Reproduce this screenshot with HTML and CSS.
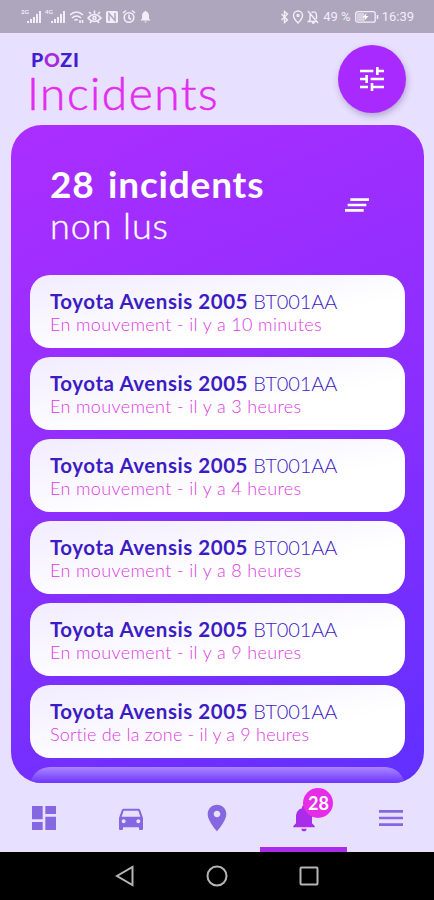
FILE: index.html
```html
<!DOCTYPE html>
<html lang="fr">
<head>
    <meta charset="UTF-8">
    <meta name="viewport" content="width=device-width, initial-scale=1.0">
    <title>POZI - Incidents</title>
    <link rel="stylesheet" href="styles.css">
</head>
<body>

    <!-- Status bar -->
    <div class="status-bar">
        <svg class="status-left" width="132" height="16" viewBox="0 0 132 16" fill="#f3edfa">
            <text class="net" x="0" y="5">2G</text>
            <path d="M6 12h2v2H6zM9 10h2v4H9zM12 8h2v6h-2zM15 5h2v9h-2zM18 2h2v12h-2z"/>
            <text class="net" x="24" y="5">4G</text>
            <path d="M30 12h2v2h-2zM33 10h2v4h-2zM36 8h2v6h-2zM39 5h2v9h-2zM42 2h2v12h-2z"/>
            <g fill="none" stroke="#f3edfa" stroke-width="1.6">
                <path d="M49 6q6.500-6 13 0M51 9q4.500-4 9 0M53.500 11.500q2-2 3 0M59 14v-3M61.500 14v-3"/>
                <path d="M67 9q6.500-7 13 0q-6.500 7-13 0zM68 3l2 2M73.500 1.500v3M79 3l-2 2M69 14l1.500-2M78 14l-1.500-2"/>
                <circle cx="73.500" cy="9" r="1.500"/>
                <circle cx="108" cy="8.500" r="4.800"/>
                <path d="M108 5.500v3.500l2 1.500M102 4l3-2.500M114 4l-3-2.500"/>
            </g>
            <rect x="85" y="2" width="12" height="12" rx="1.500"/>
            <path d="M88 12V4.500l6 7V4" fill="none" stroke="#aea6bc" stroke-width="1.500"/>
            <path d="M119.500 11.500l1.500-2V7q0-3.500 2.500-4.200a1 1 0 0 1 2 0Q128 3.500 128 7v2.500l1.500 2zM123 12.500h3q-1.500 2-3 0z"/>
        </svg>
        <div class="status-right">
            <svg width="40" height="14" viewBox="0 0 40 14" fill="none" stroke="#f3edfa" stroke-width="1.400">
                <path d="M1.500 4l6 6L4.500 12.500v-11L7.500 4l-6 6"/>
                <path d="M18 13q-4.500-4.500-4.500-7.500a4.500 4.500 0 0 1 9 0Q22.500 8.500 18 13z"/>
                <circle cx="18" cy="5.500" r="1"/>
                <path d="M28 1l10 12M30 4.500v5.500l-1.500 1.500h7.500M31.500 2.500q4.500-2 5 2.500v4M32 13h2.500"/>
            </svg>
            <span class="battery-level">49 %</span>
            <svg width="24" height="12" viewBox="0 0 24 12" fill="none" stroke="#f3edfa">
                <rect x=".7" y=".7" width="19.500" height="10.500" rx="2" stroke-width="1.300"/>
                <path d="M2 2h7v8H2z" fill="#d6cfe0" stroke="none"/>
                <path d="M11.500 2l-4 4.500h2.500L9 10l4.500-5H11z" fill="#fff" stroke="none"/>
                <path d="M22.500 4v4" stroke-width="1.500"/>
            </svg>
            <span class="clock">16:39</span>
        </div>
    </div>

    <!-- Header -->
    <div class="header">
        <div class="titles">
            <div class="brand">P<span>O</span>ZI</div>
            <h1>Incidents</h1>
        </div>
        <button class="filter-button">
            <svg class="icon" viewBox="0 0 24 24"><path d="M3 17v2h6v-2H3zM3 5v2h10V5H3zm10 16v-2h8v-2h-8v-2h-2v6h2zM7 9v2H3v2h4v2h2V9H7zm14 4v-2H11v2h10zm-6-4h2V7h4V5h-4V3h-2v6z"/></svg>
        </button>
    </div>

    <!-- Unread incidents -->
    <div class="panel">
        <div class="panel-header">
            <div>
                <div class="count">28&nbsp; incidents</div>
                <div class="unread">non lus</div>
            </div>
            <svg class="icon" viewBox="0 0 24 24"><path d="M5 13h14v-2H5v2zm-2 4h14v-2H3v2zM7 7v2h14V7H7z"/></svg>
        </div>
        <ul class="incident-list">
            <li class="incident">
                <div class="vehicle"><strong>Toyota Avensis 2005</strong> <span>BT001AA</span></div>
                <div class="event">En mouvement - il y a 10 minutes</div>
            </li>
            <li class="incident">
                <div class="vehicle"><strong>Toyota Avensis 2005</strong> <span>BT001AA</span></div>
                <div class="event">En mouvement - il y a 3 heures</div>
            </li>
            <li class="incident">
                <div class="vehicle"><strong>Toyota Avensis 2005</strong> <span>BT001AA</span></div>
                <div class="event">En mouvement - il y a 4 heures</div>
            </li>
            <li class="incident">
                <div class="vehicle"><strong>Toyota Avensis 2005</strong> <span>BT001AA</span></div>
                <div class="event">En mouvement - il y a 8 heures</div>
            </li>
            <li class="incident">
                <div class="vehicle"><strong>Toyota Avensis 2005</strong> <span>BT001AA</span></div>
                <div class="event">En mouvement - il y a 9 heures</div>
            </li>
            <li class="incident">
                <div class="vehicle"><strong>Toyota Avensis 2005</strong> <span>BT001AA</span></div>
                <div class="event zone">Sortie de la zone - il y a 9 heures</div>
            </li>
            <li class="incident faded"></li>
        </ul>
    </div>

    <!-- Tabs -->
    <nav class="tabs">
        <a class="tab"><svg class="icon" viewBox="0 0 24 24"><path d="M3 13h8V3H3v10zm0 8h8v-6H3v6zm10 0h8V11h-8v10zm0-18v6h8V3h-8z"/></svg></a>
        <a class="tab"><svg class="icon" viewBox="0 0 24 24"><path d="M18.920 6.010C18.720 5.420 18.160 5 17.500 5h-11c-.66 0-1.210.42-1.420 1.010L3 12v8c0 .55.45 1 1 1h1c.55 0 1-.45 1-1v-1h12v1c0 .55.45 1 1 1h1c.55 0 1-.45 1-1v-8l-2.080-5.990zM6.500 16c-.83 0-1.500-.67-1.500-1.500S5.670 13 6.500 13s1.500.67 1.500 1.500S7.330 16 6.500 16zm11 0c-.83 0-1.500-.67-1.500-1.500s.67-1.500 1.500-1.500 1.500.67 1.500 1.500-.67 1.500-1.500 1.500zM5 11l1.500-4.500h11L19 11H5z"/></svg></a>
        <a class="tab"><svg class="icon" viewBox="0 0 24 24"><path d="M12 2C8.130 2 5 5.130 5 9c0 5.250 7 13 7 13s7-7.750 7-13c0-3.870-3.130-7-7-7zm0 9.500c-1.380 0-2.500-1.120-2.500-2.500s1.120-2.500 2.500-2.500 2.500 1.120 2.500 2.500-1.120 2.500-2.500 2.500z"/></svg></a>
        <a class="tab active">
            <svg class="icon" viewBox="0 0 24 24"><path d="M12 22c1.100 0 2-.9 2-2h-4c0 1.100.89 2 2 2zm6-6v-5c0-3.070-1.640-5.640-4.500-6.320V4c0-.83-.67-1.500-1.500-1.500s-1.500.67-1.500 1.500v.68C7.630 5.360 6 7.920 6 11v5l-2 2v1h16v-1l-2-2z"/></svg>
            <span class="badge">28</span>
        </a>
        <a class="tab"><svg class="icon" viewBox="0 0 24 24"><path d="M3 18h18v-2H3v2zm0-5h18v-2H3v2zm0-7v2h18V6H3z"/></svg></a>
    </nav>

    <!-- System navigation -->
    <div class="system-nav">
        <svg width="22" height="24" viewBox="0 0 22 24"><path d="M18.500 3v18L3 12z"/></svg>
        <svg width="22" height="24" viewBox="0 0 22 24"><circle cx="11" cy="12" r="9.500"/></svg>
        <svg width="22" height="24" viewBox="0 0 22 24"><rect x="2.500" y="3.500" width="17" height="17" rx="1"/></svg>
    </div>

</body>
</html>
```
FILE: styles.css
```css
/* General Layout Styles */
* {
    box-sizing: border-box;
}

body {
    font-family: Lato, 'Noto Sans', sans-serif;
    background-color: #e8e0ff;
    margin: 0;
    height: 900px;
    display: flex;
    flex-direction: column;
    overflow: hidden;
}

.icon {
    width: 32px;
    height: 32px;
    fill: currentColor;
}

/* Status Bar */
.status-bar {
    height: 33px;
    background-color: #aea6bc;
    display: flex;
    justify-content: space-between;
    align-items: center;
    padding: 0 20px 0 21px;
    color: #f3edfa;
}

.net {
    font-size: 6px;
    font-weight: bold;
}

.status-right {
    display: flex;
    align-items: center;
    font-family: Roboto, sans-serif;
    font-size: 13px;
}

.battery-level {
    margin: 0 4px 0 3px;
}

.clock {
    margin-left: 3px;
}

/* Header */
.header {
    height: 92px;
    display: flex;
    justify-content: space-between;
    padding: 12px 28px 0 27px;
}

.brand {
    margin: 5px 0 0 4px;
    font-size: 19.5px;
    line-height: 20px;
    font-weight: 900;
    letter-spacing: 0.8px;
    color: #3f1fd0;
}

.brand span {
    color: #a42bdc;
}

h1 {
    margin: 0;
    font-size: 46px;
    line-height: 46px;
    font-weight: 300;
    letter-spacing: 1.5px;
    color: #e22cf0;
    -webkit-text-stroke: 0.6px #e22cf0;
}

.filter-button {
    width: 68px;
    height: 68px;
    padding: 0;
    border: none;
    border-radius: 50%;
    background-color: #a82aff;
    color: #fff;
    display: flex;
    align-items: center;
    justify-content: center;
    box-shadow: 1px 3px 6px rgba(80, 60, 120, 0.35);
}

/* Incident Panel */
.panel {
    height: 658px;
    margin: 0 10px 0 11px;
    padding: 0 19px;
    border-radius: 31px;
    background: linear-gradient(155deg, #ab2eff 0%, #8c2eff 50%, #6030ff 100%);
    overflow: hidden;
}

.panel-header {
    height: 150px;
    padding: 38px 32px 0 20px;
    display: flex;
    justify-content: space-between;
    color: #fff;
}

.panel-header .icon {
    margin-top: 26px;
}

.count {
    font-size: 37px;
    line-height: 42px;
    font-weight: bold;
    letter-spacing: 0.8px;
    word-spacing: -3px;
}

.unread {
    font-size: 36px;
    line-height: 40px;
    font-weight: 300;
    letter-spacing: 0.9px;
    -webkit-text-stroke: 0.4px #fff;
}

.incident-list {
    list-style: none;
    margin: 0;
    padding: 0;
    display: flex;
    flex-direction: column;
    gap: 9px;
}

.incident {
    height: 73px;
    flex-shrink: 0;
    padding: 14px 20px;
    border-radius: 20px;
    background: linear-gradient(170deg, #f1ecff 0%, #fff 65%);
    white-space: nowrap;
}

.vehicle {
    font-size: 20px;
    line-height: 25px;
    color: #3c1cc4;
}

.vehicle strong {
    font-size: 20.5px;
    letter-spacing: 0.54px;
}

.vehicle span {
    font-weight: 300;
    letter-spacing: -0.1px;
}

.event {
    font-size: 18px;
    line-height: 20px;
    font-weight: 300;
    letter-spacing: 0.36px;
    color: #dc3be0;
}

.zone {
    letter-spacing: 0.19px;
}

.faded {
    background: linear-gradient(#ab86ff, #6c35ff 16px);
}

/* Tabs */
.tabs {
    height: 69px;
    display: flex;
}

.tab {
    flex: 1;
    position: relative;
    display: flex;
    align-items: center;
    justify-content: center;
    padding-left: 1px;
    color: #8567e2;
}

.tab.active {
    color: #a82ce8;
    border-bottom: 5px solid #a82ce8;
    padding-top: 5px;
}

.badge {
    position: absolute;
    left: 43px;
    top: 5px;
    width: 30px;
    height: 30px;
    border-radius: 50%;
    background-color: #e62ce6;
    color: #fff;
    font-size: 18px;
    line-height: 30px;
    font-weight: bold;
    text-align: center;
}

/* System Navigation */
.system-nav {
    height: 48px;
    background-color: #000;
    display: flex;
    align-items: center;
    justify-content: center;
    gap: 70px;
    fill: none;
    stroke: #b5b5b5;
    stroke-width: 2;
}
```
